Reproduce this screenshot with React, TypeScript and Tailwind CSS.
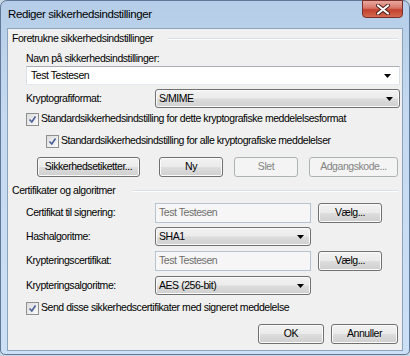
import React from 'react';

const btnFace =
  'bg-[linear-gradient(#f2f2f2_0%,#ebebeb_48%,#dddddd_52%,#cfcfcf_100%)] border border-[#707070] rounded-[3px] shadow-[inset_0_0_0_1px_#fbfbfb]';

function Arrow() {
  return (
    <svg width="7" height="4" viewBox="0 0 7 4" className="shrink-0">
      <path d="M0 0h7L3.5 4z" fill="#000" />
    </svg>
  );
}

function Button({ label, className = '', disabled = false, focused = false }: { label: string; className?: string; disabled?: boolean; focused?: boolean }) {
  if (disabled) {
    return (
      <div className={`h-full flex items-center justify-center rounded-[3px] border border-[#adb2b5] bg-[#f4f4f4] text-[#838383] ${className}`}>
        {label}
      </div>
    );
  }
  return (
    <div
      className={`h-full flex items-center justify-center ${btnFace} ${
        focused ? 'border-[#3c7fb1] shadow-[inset_0_0_0_1px_#a9e4fa]' : ''
      } ${className}`}
    >
      {label}
    </div>
  );
}

function Select({ value, className = '' }: { value: string; className?: string }) {
  return (
    <div className={`h-full flex items-center justify-between pl-[3px] pr-[6px] ${btnFace} ${className}`}>
      <span>{value}</span>
      <Arrow />
    </div>
  );
}

function ReadOnlyBox({ value, className = '' }: { value: string; className?: string }) {
  return (
    <div className={`h-full flex items-center pl-[3px] border border-[#b5c3d3] bg-[#f6f6f6] text-[#6d6d6d] ${className}`}>
      {value}
    </div>
  );
}

function CheckBox({ label }: { label: string }) {
  return (
    <div className="flex items-center gap-[2px] h-full">
      <div className="w-[13px] h-[13px] border border-[#8e8f8f] bg-[linear-gradient(135deg,#dcdcdc,#fbfbfb)] flex items-center justify-center">
        <svg width="9" height="9" viewBox="0 0 9 9">
          <path d="M1.5 4.5 L3.8 7 L7.5 1.5" fill="none" stroke="#4a5f97" strokeWidth="1.6" />
        </svg>
      </div>
      <span>{label}</span>
    </div>
  );
}

function GroupHeader({ title, width }: { title: string; width: string }) {
  return (
    <div className="h-[16px] flex items-center pl-[4px] pr-[4px]">
      <span className={`${width} shrink-0 whitespace-nowrap`}>{title}</span>
      <div className="flex-1 h-[2px] border-t border-[#d5dfe5] border-b border-b-white" />
    </div>
  );
}

export default function App() {
  return (
    <div className="w-[410px] h-[356px] bg-[#c9d6e3] overflow-hidden font-['Liberation_Sans',Arial,sans-serif] text-[10.5px] tracking-[-0.45px] text-black">
      <div className="relative w-[410px] h-[355px] rounded-t-[7px] rounded-b-[5px] border border-[#5f7897] bg-[linear-gradient(180deg,#b5cde8_0%,#c4d9f0_30%,#cce0f5_100%)] flex flex-col">
        {/* title bar */}
        <div className="h-[27px] flex items-center pl-[7px] text-[11.5px] tracking-[-0.4px] shrink-0">Rediger sikkerhedsindstillinger</div>
        <div className="absolute top-[-1px] right-[6px] w-[41px] h-[18px] rounded-b-[4px] border border-[#7a2e2b] bg-[linear-gradient(#e9a99f_0%,#d67467_45%,#c3402f_55%,#d36a4f_100%)] flex items-center justify-center">
          <svg width="14" height="11" viewBox="0 0 14 11">
            <path d="M2 1.5 L12 9.5 M12 1.5 L2 9.5" stroke="#4b1d19" strokeWidth="4" strokeLinecap="round" />
            <path d="M2 1.5 L12 9.5 M12 1.5 L2 9.5" stroke="#fff" strokeWidth="2.2" strokeLinecap="round" />
          </svg>
        </div>

        {/* client area */}
        <div className="mx-[6px] h-[323px] border border-[#8da3bd] bg-[#f0f0f0] flex flex-col">
          <div className="mt-[2px]">
            <GroupHeader title="Foretrukne sikkerhedsindstillinger" width="w-[156px]" />
          </div>
          <div className="mt-[4px] h-[15px] leading-[15px] pl-[18px]">Navn på sikkerhedsindstillinger:</div>
          <div className="ml-[18px] w-[374px] h-[19px] flex items-center justify-between pl-[4px] pr-[8px] bg-white border border-[#abadb3] border-b-[#e3e9ef] border-x-[#dbdfe6]">
            <span>Test Testesen</span>
            <Arrow />
          </div>
          <div className="mt-[4px] h-[19px] flex items-center">
            <span className="w-[147px] pl-[18px] shrink-0">Kryptografiformat:</span>
            <Select value="S/MIME" className="w-[245px]" />
          </div>
          <div className="mt-[3px] h-[16px] pl-[18px]">
            <CheckBox label="Standardsikkerhedsindstilling for dette kryptografiske meddelelsesformat" />
          </div>
          <div className="mt-[6px] h-[16px] pl-[38px]">
            <CheckBox label="Standardsikkerhedsindstilling for alle kryptografiske meddelelser" />
          </div>
          <div className="mt-[8px] h-[20px] flex">
            <Button label="Sikkerhedsetiketter..." className="ml-[29px] w-[103px]" />
            <Button label="Ny" className="ml-[19px] w-[64px]" />
            <Button label="Slet" className="ml-[11px] w-[64px]" disabled />
            <Button label="Adgangskode..." className="ml-[11px] w-[89px]" disabled />
          </div>
          <div className="mt-[6px]">
            <GroupHeader title="Certifikater og algoritmer" width="w-[121px]" />
          </div>
          <div className="mt-[4px] h-[20px] flex items-center">
            <span className="w-[147px] pl-[18px] shrink-0">Certifikat til signering:</span>
            <ReadOnlyBox value="Test Testesen" className="w-[156px]" />
            <Button label="Vælg..." className="ml-[7px] w-[64px]" focused />
          </div>
          <div className="mt-[4px] h-[19px] flex items-center">
            <span className="w-[147px] pl-[18px] shrink-0">Hashalgoritme:</span>
            <Select value="SHA1" className="w-[156px]" />
          </div>
          <div className="mt-[5px] h-[20px] flex items-center">
            <span className="w-[147px] pl-[18px] shrink-0">Krypteringscertifikat:</span>
            <ReadOnlyBox value="Test Testesen" className="w-[156px]" />
            <Button label="Vælg..." className="ml-[7px] w-[64px]" />
          </div>
          <div className="mt-[5px] h-[19px] flex items-center">
            <span className="w-[147px] pl-[18px] shrink-0">Krypteringsalgoritme:</span>
            <Select value="AES (256-bit)" className="w-[156px]" />
          </div>
          <div className="mt-[5px] h-[16px] pl-[18px]">
            <CheckBox label="Send disse sikkerhedscertifikater med signeret meddelelse" />
          </div>
          <div className="mt-[8px] h-[20px] flex justify-end pr-[4px]">
            <Button label="OK" className="w-[66px]" />
            <Button label="Annuller" className="ml-[7px] w-[67px]" />
          </div>
        </div>
      </div>
    </div>
  );
}
